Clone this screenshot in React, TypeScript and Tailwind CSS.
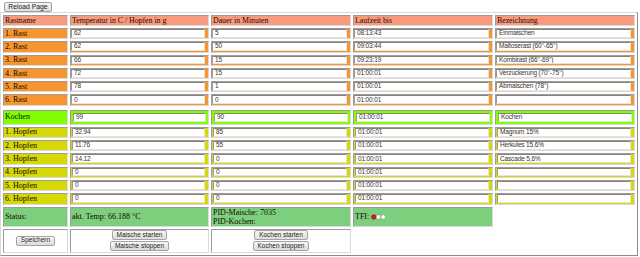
import React from 'react'

const serif = "font-['Liberation_Serif','Times_New_Roman',serif]"
const sans = "font-['Liberation_Sans',Arial,sans-serif]"
const inset = 'border border-t-[#9c9c9c] border-l-[#9c9c9c] border-b-[#dadada] border-r-[#dadada]'

const rast = [
    ['1. Rast', '62', '5', '08:13:43', 'Einmaischen'],
    ['2. Rast', '62', '50', '09:03:44', 'Maltoserast (60°-65°)'],
    ['3. Rast', '66', '15', '09:23:19', 'Kombirast (66°-69°)'],
    ['4. Rast', '72', '15', '01:00:01', 'Verzuckerung (70°-75°)'],
    ['5. Rast', '78', '1', '01:00:01', 'Abmaischen (78°)'],
    ['6. Rast', '0', '0', '01:00:01', ''],
]

const hopfen = [
    ['1. Hopfen', '32.94', '85', '01:00:01', 'Magnum 15%'],
    ['2. Hopfen', '11.76', '55', '01:00:01', 'Herkules 15,6%'],
    ['3. Hopfen', '14.12', '0', '01:00:01', 'Cascade 5,6%'],
    ['4. Hopfen', '0', '0', '01:00:01', ''],
    ['5. Hopfen', '0', '0', '01:00:01', ''],
    ['6. Hopfen', '0', '0', '01:00:01', ''],
]

function Name({ bg, h, children }: { bg: string, h: string, children: React.ReactNode }) {
    return (
        <div className={`${inset} ${bg} ${h} ${serif} flex items-center pl-[1px] text-[8px] leading-none text-[#140800]`}>
            {children}
        </div>
    )
}

function Field({ bg, h, pad, value }: { bg: string, h: string, pad: string, value: string }) {
    return (
        <div className={`${inset} ${bg} ${h} ${pad}`}>
            <div className={`h-full bg-white border border-t-[#8a8078] border-l-[#a09890] border-b-[#e8e2da] border-r-[#e8e2da] ${sans} flex items-center pl-[2px] text-[6.5px] leading-none text-[#333] tracking-[-0.15px] overflow-hidden`}>
                {value}
            </div>
        </div>
    )
}

function Btn({ children }: { children: React.ReactNode }) {
    return (
        <button className={`h-[10px] px-[4px] rounded-[2px] border border-[#a3a3a3] bg-gradient-to-b from-[#f7f7f7] to-[#dcdcdc] ${sans} text-[6.5px] leading-none text-[#222]`}>
            {children}
        </button>
    )
}

function DataRow({ row, nameBg, fieldBg, h, pad }: { row: string[], nameBg: string, fieldBg: string, h: string, pad: string }) {
    return (
        <>
            <Name bg={nameBg} h={h}>{row[0]}</Name>
            {row.slice(1).map((v, i) => (
                <Field key={i} bg={fieldBg} h={h} pad={pad} value={v} />
            ))}
        </>
    )
}

export default function App() {
    const headers = ['Rastname', 'Temperatur in C / Hopfen in g', 'Dauer in Minuten', 'Laufzeit bis', 'Bezeichnung']

    return (
        <div className="w-[640px] h-[257px] bg-white overflow-hidden">
            <div className="flex items-start pl-[4px] pt-[2px] h-[12px]">
                <button className={`h-[10px] w-[48px] rounded-[2px] border border-[#a0a0a0] bg-gradient-to-b from-[#f8f8f8] to-[#dddddd] ${sans} text-[6.8px] leading-none text-[#222]`}>
                    Reload Page
                </button>
            </div>

            <div className="w-[638px] border border-t-[#dadada] border-l-[#dadada] border-b-[#8c8c8c] border-r-[#8c8c8c] p-[2px]">
                <div className="grid grid-cols-[65px_139px_140px_140px_140px] gap-[2px]">
                    {headers.map(t => (
                        <div key={t} className={`${inset} h-[11px] bg-[#f99a7c] ${serif} flex items-center pl-[1px] text-[7.8px] leading-none text-[#1a0a00]`}>
                            {t}
                        </div>
                    ))}

                    {rast.map(r => (
                        <DataRow key={r[0]} row={r} nameBg="bg-[#f7962f]" fieldBg="bg-[#f7962f]" h="h-[11.3px]" pad="pt-0 pl-0 pb-[0.5px] pr-[3px]" />
                    ))}

                    <div className="col-span-5 h-0" />

                    <DataRow row={['Kochen', '99', '90', '01:00:01', 'Kochen']} nameBg="bg-[#80ff00]" fieldBg="bg-[#80ff00]" h="h-[15px]" pad="p-[2px]" />

                    {hopfen.map(r => (
                        <DataRow key={r[0]} row={r} nameBg="bg-[#d6d808]" fieldBg="bg-[#d6d808]" h="h-[11.3px]" pad="pt-0 pl-[1px] pb-[0.5px] pr-[3px]" />
                    ))}

                    <Name bg="bg-[#7dcf7d]" h="h-[20px]">Status:</Name>
                    <Name bg="bg-[#7dcf7d]" h="h-[20px]">akt. Temp: 66.188 °C</Name>
                    <div className={`${inset} h-[20px] bg-[#7dcf7d] ${serif} flex flex-col justify-center pl-[1px] text-[8px] leading-[9px] text-[#140800]`}>
                        <span>PID-Maische: 7035</span>
                        <span>PID-Kochen:</span>
                    </div>
                    <div className={`${inset} h-[20px] bg-[#7dcf7d] ${serif} flex items-center gap-[2px] pl-[1px] text-[8px] leading-none text-[#140800]`}>
                        <span>TFI:</span>
                        <svg width="15" height="6" viewBox="0 0 15 6">
                            <circle cx="2.8" cy="3" r="2.3" fill="#d21a1a" stroke="#8a1010" strokeWidth="0.6" />
                            <circle cx="7.5" cy="3" r="2.3" fill="#ffffff" stroke="#8c8c8c" strokeWidth="0.6" />
                            <circle cx="12.2" cy="3" r="2.3" fill="#ffffff" stroke="#8c8c8c" strokeWidth="0.6" />
                        </svg>
                    </div>
                    <div />

                    <div className={`${inset} h-[24px] bg-white flex items-center justify-center`}>
                        <Btn>Speichern</Btn>
                    </div>
                    <div className={`${inset} h-[24px] bg-white flex flex-col items-center justify-center gap-[1px]`}>
                        <Btn>Maische starten</Btn>
                        <Btn>Maische stoppen</Btn>
                    </div>
                    <div className={`${inset} h-[24px] bg-white flex flex-col items-center justify-center gap-[1px]`}>
                        <Btn>Kochen starten</Btn>
                        <Btn>Kochen stoppen</Btn>
                    </div>
                    <div className="col-span-2" />
                </div>
            </div>
        </div>
    )
}
